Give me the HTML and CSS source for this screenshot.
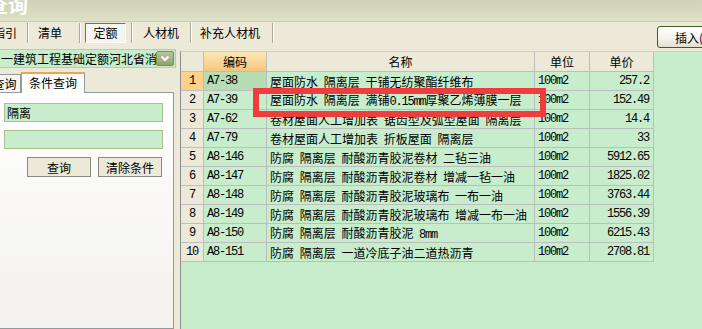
FILE: index.html
```html
<!DOCTYPE html>
<html lang="zh-CN">
<head>
    <meta charset="UTF-8">
    <title>定额查询</title>
    <link rel="stylesheet" href="styles.css">
</head>
<body>
    <div class="titlebar"><span class="title">查询</span></div>

    <div class="toolbar">
        <div class="tabs">
            <span class="tab tab-guide">指引</span>
            <span class="tab tab-list">清单</span>
            <span class="tab tab-quota"><span class="pressed">定额</span></span>
            <span class="tab tab-labor">人材机</span>
            <span class="tab tab-extra">补充人材机</span>
        </div>
        <button class="insert">插入(I)</button>
    </div>

    <div class="main">
        <div class="side">
            <div class="combo">
                <span class="combo-text">一建筑工程基础定额河北省消耗量定额</span>
                <span class="combo-btn">
                    <svg width="10" height="7" viewBox="0 0 10 7"><path d="M1.5 1.5 L5 5 L8.5 1.5" fill="none" stroke="#fff" stroke-width="2"/></svg>
                </span>
            </div>
            <div class="side-tabs">
                <span class="stab">查询</span>
                <span class="stab active">条件查询</span>
            </div>
            <div class="side-body">
                <input class="field" type="text" value="隔离">
                <input class="field" type="text" value="">
                <div class="btns">
                    <button class="btn">查询</button>
                    <button class="btn">清除条件</button>
                </div>
            </div>
        </div>

        <div class="grid">
            <table>
                <colgroup>
                    <col class="c-num"><col class="c-code"><col class="c-name"><col class="c-unit"><col class="c-price">
                </colgroup>
                <tr class="head">
                    <td class="num"></td><td class="sel-col">编码</td><td>名称</td><td>单位</td><td>单价</td>
                </tr>
                <tr class="cur">
                    <td class="num">1</td><td class="code">A7-38</td><td class="name">屋面防水 隔离层 干铺无纺聚酯纤维布</td><td class="unit">100m2</td><td class="price">257.2</td>
                </tr>
                <tr>
                    <td class="num">2</td><td class="code">A7-39</td><td class="name">屋面防水 隔离层 满铺<span class="en">0.15mm</span>厚聚乙烯薄膜一层</td><td class="unit">100m2</td><td class="price">152.49</td>
                </tr>
                <tr>
                    <td class="num">3</td><td class="code">A7-62</td><td class="name">卷材屋面人工增加表 锯齿型及弧型屋面 隔离层</td><td class="unit">100m2</td><td class="price">14.4</td>
                </tr>
                <tr>
                    <td class="num">4</td><td class="code">A7-79</td><td class="name">卷材屋面人工增加表 折板屋面 隔离层</td><td class="unit">100m2</td><td class="price">33</td>
                </tr>
                <tr>
                    <td class="num">5</td><td class="code">A8-146</td><td class="name">防腐 隔离层 耐酸沥青胶泥卷材 二毡三油</td><td class="unit">100m2</td><td class="price">5912.65</td>
                </tr>
                <tr>
                    <td class="num">6</td><td class="code">A8-147</td><td class="name">防腐 隔离层 耐酸沥青胶泥卷材 增减一毡一油</td><td class="unit">100m2</td><td class="price">1825.02</td>
                </tr>
                <tr>
                    <td class="num">7</td><td class="code">A8-148</td><td class="name">防腐 隔离层 耐酸沥青胶泥玻璃布 一布一油</td><td class="unit">100m2</td><td class="price">3763.44</td>
                </tr>
                <tr>
                    <td class="num">8</td><td class="code">A8-149</td><td class="name">防腐 隔离层 耐酸沥青胶泥玻璃布 增减一布一油</td><td class="unit">100m2</td><td class="price">1556.39</td>
                </tr>
                <tr>
                    <td class="num">9</td><td class="code">A8-150</td><td class="name">防腐 隔离层 耐酸沥青胶泥 <span class="en">8mm</span></td><td class="unit">100m2</td><td class="price">6215.43</td>
                </tr>
                <tr>
                    <td class="num">10</td><td class="code">A8-151</td><td class="name">防腐 隔离层 一道冷底子油二道热沥青</td><td class="unit">100m2</td><td class="price">2708.81</td>
                </tr>
            </table>
            <div class="mark"></div>
        </div>
    </div>
</body>
</html>
```

FILE: styles.css
```css
* {
    box-sizing: border-box;
}
body {
    margin: 0;
    width: 702px;
    height: 329px;
    overflow: hidden;
    background: #ece9d8;
    font-family: "Noto Sans CJK SC", sans-serif;
    font-size: 12px;
    color: #000;
}

/* title bar */
.titlebar {
    height: 22px;
    overflow: hidden;
    background: linear-gradient(#cfd2b6, #d8dbbf 70%, #e0e2c8);
    border-bottom: 1px solid #c9cab5;
}
.title {
    display: block;
    margin: -6px 0 0 -12px;
    font-size: 20px;
    font-weight: bold;
    line-height: 22px;
    color: #fff;
}

/* toolbar tabs */
.toolbar {
    display: flex;
    height: 27px;
}
.tabs {
    display: flex;
    height: 20px;
    margin-top: 1px;
}
.tab {
    height: 20px;
    line-height: 20px;
    border-right: 1px solid #aca899;
    box-shadow: 1px 0 0 #fff;
    white-space: nowrap;
}
.tab-guide {
    width: 45px;
    margin-left: -17px;
    text-align: center;
}
.tab-list {
    width: 52px;
    padding-left: 10px;
}
.tab-quota {
    width: 52px;
    padding-left: 5px;
}
.tab-labor {
    width: 59px;
    padding-left: 11px;
}
.tab-extra {
    width: 82px;
    padding-left: 9px;
}
.pressed {
    display: block;
    width: 41px;
    height: 20px;
    line-height: 18px;
    text-align: center;
    background: #f6f5ef;
    border: 1px solid;
    border-color: #716f64 #fff #fff #716f64;
}
.insert {
    margin: 4px -27px 0 auto;
    width: 72px;
    height: 22px;
    padding: 0 0 0 17px;
    text-align: left;
    font: inherit;
    border: 1px solid #3d5b2c;
    border-radius: 3px;
    background: linear-gradient(#fff, #f3f2ea 60%, #e2dfcd);
}

/* left panel */
.main {
    display: flex;
    height: 280px;
}
.side {
    width: 176px;
    display: flex;
    flex-direction: column;
}
.combo {
    display: flex;
    align-items: center;
    height: 19px;
    background: #c7edcc;
    border: 1px solid #b4cfa6;
    border-left: none;
}
.combo-text {
    flex: 1;
    overflow: hidden;
    white-space: nowrap;
    padding-left: 1px;
}
.combo-btn {
    display: flex;
    align-items: center;
    justify-content: center;
    width: 18px;
    height: 15px;
    margin-right: 1px;
    background: linear-gradient(#b9c59c, #93a26c);
    border: 1px solid #7c8b5a;
    border-radius: 2px;
}
.side-tabs {
    display: flex;
    align-items: flex-end;
    height: 24px;
}
.stab {
    height: 18px;
    line-height: 17px;
    text-align: center;
    border: 1px solid #919b9c;
    border-bottom: none;
    background: #f5f4ee;
}
.stab:first-child {
    width: 33px;
    margin-left: -12px;
}
.stab.active {
    width: 64px;
    height: 21px;
    margin-bottom: -1px;
    line-height: 18px;
    border-top: 2px solid #f0a44c;
    background: #fdfdfc;
    position: relative;
}
.side-body {
    flex: 1;
    width: 174px;
    padding: 10px 0 0 4px;
    background: linear-gradient(#fefefe, #f3f2ec);
    border: 1px solid #919b9c;
    border-left: none;
}
.field {
    display: block;
    width: 159px;
    height: 19px;
    margin-bottom: 8px;
    padding: 0 2px;
    font: inherit;
    background: #c7edcc;
    border: 1px solid #a9c08c;
}
.btns {
    display: flex;
    justify-content: flex-end;
    gap: 7px;
    width: 158px;
}
.btn {
    width: 64px;
    height: 20px;
    padding: 0;
    font: inherit;
    background: #ece9d8;
    border: 1px solid #8a897f;
}

/* grid */
.grid {
    flex: 1;
    margin: 2px 0 0 4px;
    position: relative;
    background: #c7edcc;
    border-left: 1px solid #8e8e8e;
    border-top: 1px solid #cfcfc0;
}
table {
    border-spacing: 0;
    table-layout: fixed;
    width: 473px;
}
.c-num { width: 23px; }
.c-code { width: 63px; }
.c-name { width: 268px; }
.c-unit { width: 55px; }
.c-price { width: 64px; }
td {
    padding: 0;
    height: 19px;
    border-right: 1px solid #bdbdbd;
    border-bottom: 1px solid #bdbdbd;
    white-space: nowrap;
    overflow: hidden;
}
.head td {
    height: 20px;
    text-align: center;
    background: #ece9d8;
}
.head .sel-col {
    background: linear-gradient(#fde8b6, #f7c57c);
}
.num {
    text-align: center;
    background: #ece9d8;
}
.cur .num {
    background: #fcd18c;
}
.cur .code {
    background: #b6dcb4;
}
.num, .code, .unit, .price, .en {
    font-family: "Liberation Mono", monospace;
    font-size: 12px;
    letter-spacing: -1.2px;
}
.code, .unit {
    padding-left: 3px;
}
.name {
    padding-left: 3px;
    word-spacing: 3px;
}
.price {
    text-align: right;
    padding-right: 4px;
}
.mark {
    position: absolute;
    left: 72px;
    top: 36px;
    width: 293px;
    height: 29px;
    border: 6px solid #f03c3c;
}
```
